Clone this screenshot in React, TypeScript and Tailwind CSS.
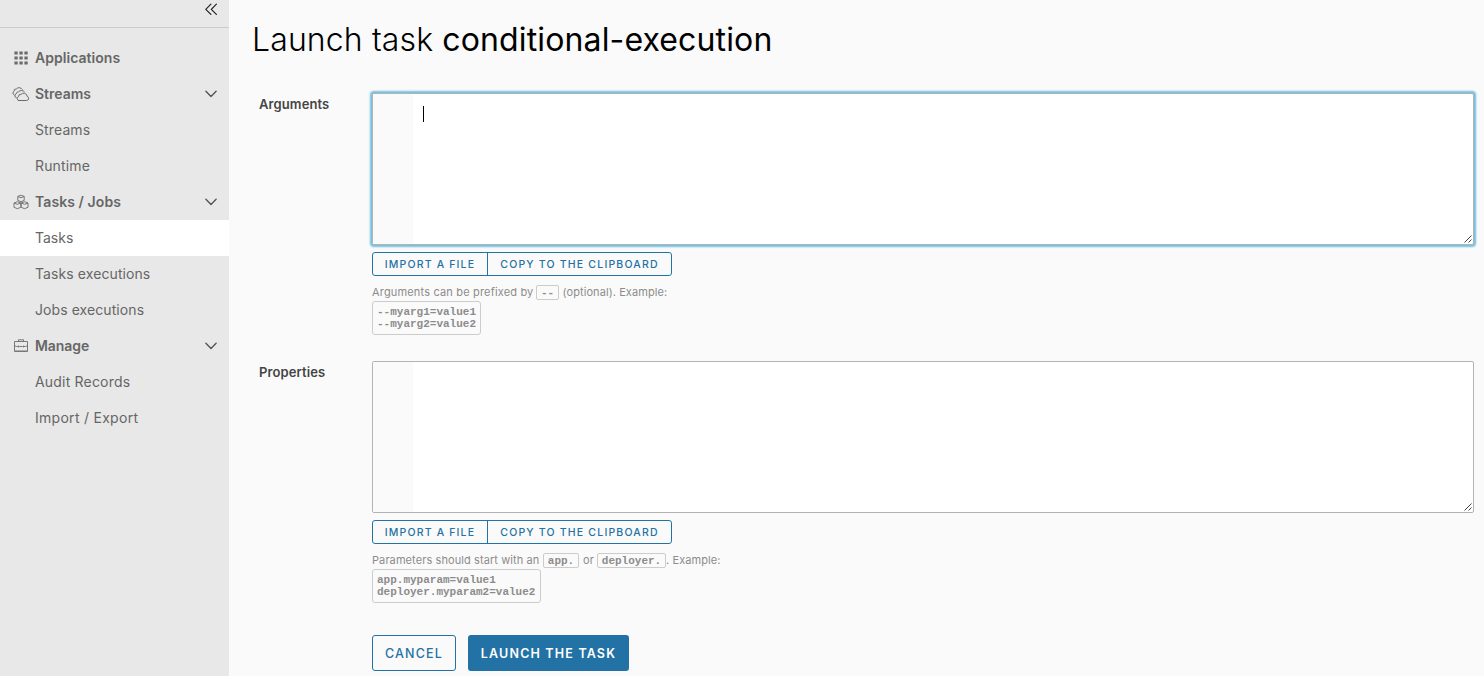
import type { ReactNode } from "react";

function GridIcon() {
  const cells = [1, 6, 11];
  return (
    <svg width="16" height="16" viewBox="0 0 16 16" fill="#6b6b6b">
      {cells.map((y) => cells.map((x) => <rect key={`${x}-${y}`} x={x + 0.4} y={y + 0.5} width="3.300" height="3" />))}
    </svg>
  );
}

function CloudsIcon() {
  return (
    <svg width="18" height="16" viewBox="0 0 18 16" fill="none" stroke="#6b6b6b" strokeWidth="1" strokeLinecap="round" strokeLinejoin="round">
      <path d="M6.600 14.500h8.100a2.100 2.100 0 0 0 .5-4.100 3.600 3.600 0 0 0-6.300-2 2 2 0 0 0-2.300 2.100 2.100 2.100 0 0 0 0 4z" />
      <path d="M4.300 11.800a2 2 0 0 1-.1-3.800 2 2 0 0 1 2.400-2.100 3.600 3.600 0 0 1 5.800-.1" />
      <path d="M2.200 9a2.100 2.100 0 0 1-.1-3.800A2 2 0 0 1 4.300 3a3.600 3.600 0 0 1 5.900.3" />
    </svg>
  );
}

function BlocksIcon() {
  return (
    <svg width="16" height="16" viewBox="0 0 16 16" fill="none" stroke="#6b6b6b" strokeWidth="0.9" strokeLinejoin="round">
      <path d="M8 1.200 11.200 2.400v4L8 7.700 4.800 6.400v-4zM4.800 2.500l3.200 1.200 3.200-1.200" />
      <path d="M4.400 7.700 7.800 9v4.300L4.400 14.700 1 13.300V9zM1 9l3.400 1.300L7.800 9" />
      <path d="M11.600 7.700 15 9v4.300l-3.400 1.400-3.400-1.400V9zM8.200 9l3.400 1.300L15 9" />
    </svg>
  );
}

function CaseIcon() {
  return (
    <svg width="16" height="16" viewBox="0 0 16 16" fill="none" stroke="#6b6b6b" strokeWidth="0.9">
      <path d="M1.500 3.500h13v10h-13zM5.500 3.500v-1.700h5v1.700M1.500 7.700l2 .8h2M6.300 8.500h3.400M10.500 8.500h2l2-.8" />
      <path d="M1.500 12.500h13" strokeOpacity="0.500" />
      <path d="M5.500 7.600v1.800M10.500 7.600v1.800" />
    </svg>
  );
}

function Chevron() {
  return (
    <svg width="12" height="8" viewBox="0 0 12 8" fill="none" stroke="#565656" strokeWidth="1.400" strokeLinecap="round" strokeLinejoin="round">
      <path d="M.9 1.300 6 6.400l5.100-5.100" />
    </svg>
  );
}

function Group({ icon, label, tracking, open = true }: { icon: ReactNode; label: string; tracking: string; open?: boolean }) {
  return (
    <div className="flex h-9 items-center pr-3">
      <span className="flex w-[35px] shrink-0 justify-center pl-[7px]">{icon}</span>
      <span className={`grow whitespace-nowrap pb-0.5 text-[14px] font-semibold text-[#666] ${tracking}`}>{label}</span>
      {open && <Chevron />}
    </div>
  );
}

function Item({ label, active = false, tracking }: { label: string; active?: boolean; tracking: string }) {
  return (
    <div className={`flex h-9 items-center whitespace-nowrap pb-0.5 pl-[35px] text-[14px] text-[#666] ${tracking} ${active ? "bg-white" : ""}`}>
      {label}
    </div>
  );
}

function Editor({ focused = false }: { focused?: boolean }) {
  return (
    <div className={`relative flex h-[152px] w-[1102px] rounded-[2px] border border-[#b3b3b3] bg-white ${focused ? "shadow-[0_0_2px_2px_#6fbfe0]" : ""}`}>
      <div className="w-10 bg-[#fafafa]" />
      {focused && <div className="ml-[10px] mt-3 h-4 w-px bg-black" />}
      <svg className="absolute bottom-0 right-0" width="10" height="10" viewBox="0 0 10 10" stroke="#444" strokeWidth="1">
        <path d="M1.500 8.500l7-7M5.500 8.500l3-3" />
      </svg>
    </div>
  );
}

function FileButtons() {
  return (
    <div className="mt-[7px] flex h-6 w-[300px] rounded-[3px] border border-[#2272a5] text-[10.500px] font-medium text-[#2272a5]">
      <button className="w-[115px] whitespace-nowrap border-r border-[#2272a5] pt-0.5 tracking-[1.160px]">IMPORT A FILE</button>
      <button className="grow whitespace-nowrap pt-0.5 tracking-[1.190px]">COPY TO THE CLIPBOARD</button>
    </div>
  );
}

function Code({ children, className }: { children: ReactNode; className: string }) {
  return (
    <code className={`flex h-[15px] items-center justify-center rounded-[2px] border border-[#ccc] pt-0.5 font-['Liberation_Mono','Courier_New',monospace] text-[11px] font-bold tracking-normal text-[#8c8c8c] ${className}`}>
      {children}
    </code>
  );
}

function Example({ lines, className }: { lines: string[]; className: string }) {
  return (
    <div className={`mt-px flex h-[34px] flex-col justify-center rounded-[3px] border border-[#ccc] pl-1 font-['Liberation_Mono','Courier_New',monospace] text-[11px] font-bold leading-3 text-[#8c8c8c] ${className}`}>
      {lines.map((line) => (
        <span key={line} className="whitespace-pre">{line}</span>
      ))}
    </div>
  );
}

export default function App() {
  return (
    <div className="flex h-[676px] w-[1484px] overflow-hidden bg-[#fafafa] font-['Inter','Lato',sans-serif]">
      <aside className="w-[229px] shrink-0 bg-[#e8e8e8]">
        <div className="flex h-7 justify-end border-b border-[#ccc] pr-[11px] pt-[3px]">
          <svg width="14" height="13" viewBox="0 0 14 13" fill="none" stroke="#222" strokeWidth="1.200" strokeLinecap="round" strokeLinejoin="round">
            <path d="M6.900 1.200 1.800 6.300l5.100 5.100M12.400 1.200 7.300 6.300l5.100 5.100" />
          </svg>
        </div>
        <nav className="pt-3">
          <Group icon={<GridIcon />} label="Applications" tracking="tracking-[0.040px]" open={false} />
          <Group icon={<CloudsIcon />} label="Streams" tracking="tracking-[0px]" />
          <Item label="Streams" tracking="tracking-[0.120px]" />
          <Item label="Runtime" tracking="tracking-[0.150px]" />
          <Group icon={<BlocksIcon />} label="Tasks / Jobs" tracking="tracking-[0.080px]" />
          <Item label="Tasks" active tracking="tracking-[0px]" />
          <Item label="Tasks executions" tracking="tracking-[0.090px]" />
          <Item label="Jobs executions" tracking="tracking-[0.080px]" />
          <Group icon={<CaseIcon />} label="Manage" tracking="tracking-[-0.050px]" />
          <Item label="Audit Records" tracking="tracking-[0.190px]" />
          <Item label="Import / Export" tracking="tracking-[0.280px]" />
        </nav>
      </aside>

      <main className="grow pl-6">
        <h1 className="-ml-px h-[93px] whitespace-nowrap pt-5 text-[32px] font-light leading-10 tracking-[0.130px] text-black">
          Launch task <span className="font-normal">conditional-execution</span>
        </h1>

        <section className="flex h-[268px]">
          <div className="w-[119px] shrink-0 pl-1.5 pt-0.5 text-[13px] font-semibold leading-[18px] tracking-[0.100px] text-[#454545]">Arguments</div>
          <div>
            <Editor focused />
            <FileButtons />
            <div className="mt-2 flex h-4 items-center whitespace-nowrap text-[11px] tracking-[0.170px] text-[#8c8c8c]">
              <span className="w-[161px]">Arguments can be prefixed by</span>
              <Code className="ml-[3px] w-[23px]">--</Code>
              <span className="ml-[3.500px] tracking-[0.080px]">(optional). Example:</span>
            </div>
            <Example className="w-[109px]" lines={["--myarg1=value1", "--myarg2=value2"]} />
          </div>
        </section>

        <section className="flex h-[274px]">
          <div className="w-[119px] shrink-0 pl-1.5 pt-0.5 text-[13px] font-semibold leading-[18px] tracking-[0.100px] text-[#454545]">Properties</div>
          <div>
            <Editor />
            <FileButtons />
            <div className="mt-2 flex h-4 items-center whitespace-nowrap text-[11px] tracking-[0.090px] text-[#8c8c8c]">
              <span className="w-[168px]">Parameters should start with an</span>
              <Code className="ml-[3px] w-9">app.</Code>
              <span className="ml-1 w-[11px]">or</span>
              <Code className="ml-[3px] w-[69px]">deployer.</Code>
              <span>. Example:</span>
            </div>
            <Example className="w-[169px]" lines={["app.myparam=value1", "deployer.myparam2=value2"]} />
          </div>
        </section>

        <div className="flex gap-3 pl-[119px]">
          <button className="h-9 w-[84px] whitespace-nowrap rounded-[3px] border border-[#2272a5] pt-0.5 text-[12.500px] font-medium tracking-[1.200px] text-[#2272a5]">CANCEL</button>
          <button className="h-9 w-[161px] whitespace-nowrap rounded-[3px] bg-[#2272a5] pt-0.5 text-[12.500px] font-semibold tracking-[1.180px] text-white">LAUNCH THE TASK</button>
        </div>
      </main>
    </div>
  );
}
